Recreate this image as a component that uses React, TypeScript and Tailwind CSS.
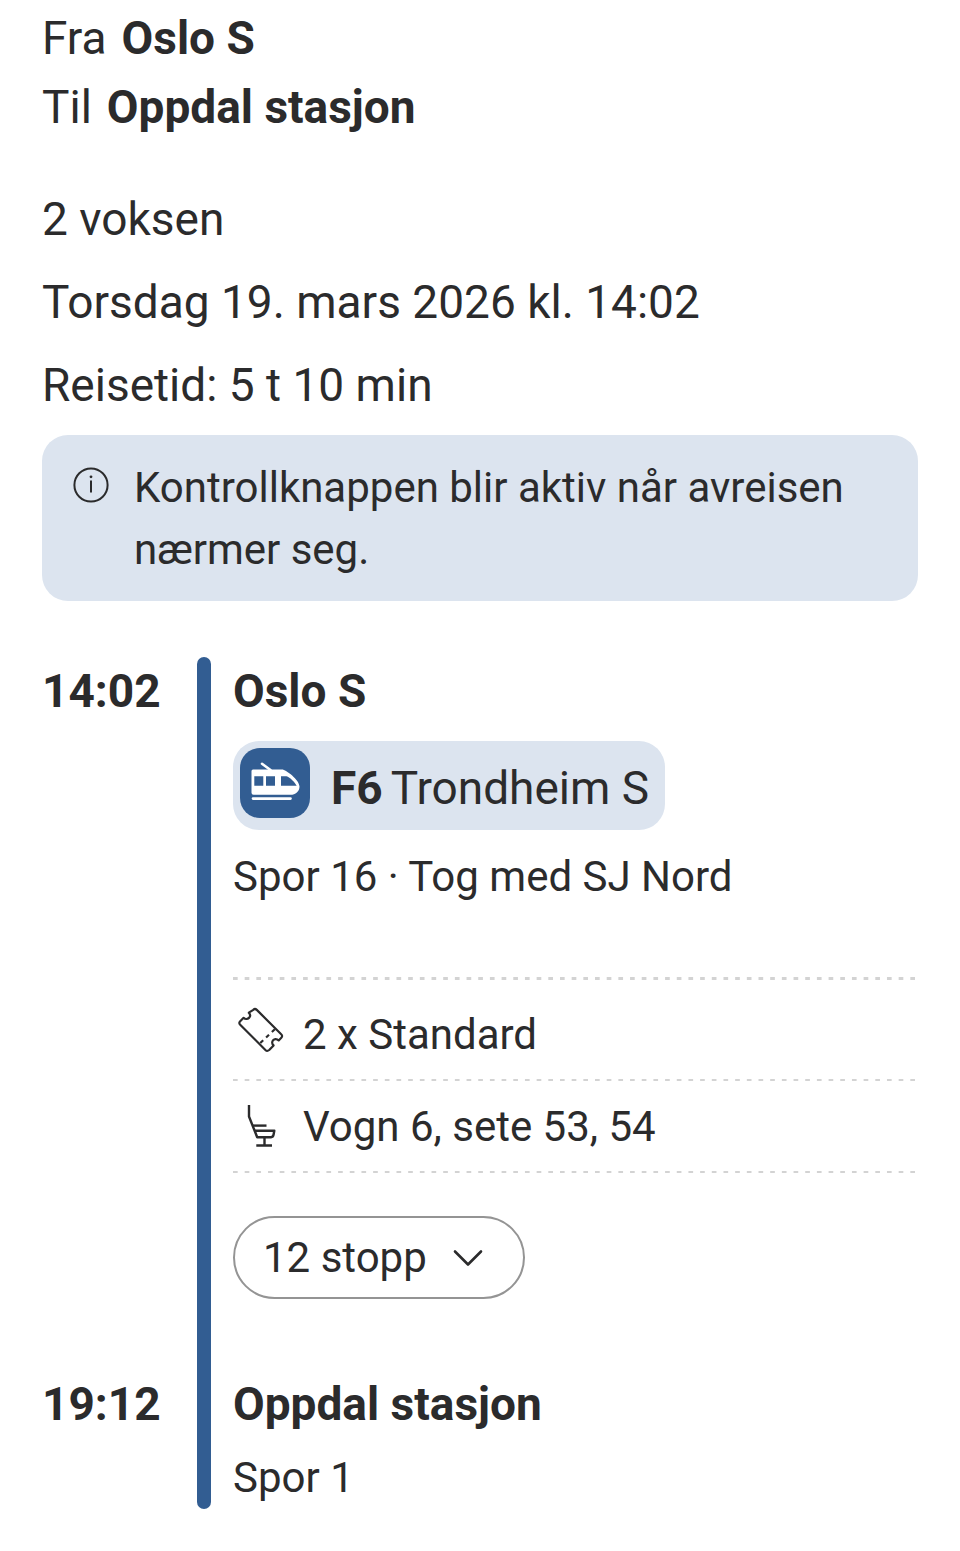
import type { ReactNode } from 'react';

const trip = {
  from: 'Oslo S',
  to: 'Oppdal stasjon',
  passengers: '2 voksen',
  departure: 'Torsdag 19. mars 2026 kl. 14:02',
  duration: 'Reisetid: 5 t 10 min',
};

function InfoIcon() {
  return (
    <svg width="36" height="36" viewBox="0 0 36 36" fill="none" stroke="currentColor" className="shrink-0" aria-hidden="true">
      <circle cx="18" cy="18" r="16.6" strokeWidth="2" />
      <path d="M18 13.6V25.5" strokeWidth="2" />
      <circle cx="18" cy="9.8" r="1.4" fill="currentColor" stroke="none" />
    </svg>
  );
}

function TrainIcon() {
  return (
    <svg width="70" height="70" viewBox="0 0 70 70" aria-hidden="true">
      <path d="M22 15.8L30.5 22" stroke="#fff" strokeWidth="2.6" strokeLinecap="round" />
      <path
        fill="#fff"
        fillRule="evenodd"
        d="M13 21.5H42C46 21.5 59.5 32 59.5 38.5C59.5 43.5 55.5 46.8 50.5 46.8H13.5Q11.5 46.8 11.5 44.8V23Q11.5 21.5 13 21.5ZM14.3 28.3V37.8H23.3V28.3ZM26 28.3V37.8H35V28.3ZM41 28.3V37.8H56.7C55 34.3 50 29.5 46.5 28.3Z"
      />
      <path d="M13 50.6H50.5" stroke="#fff" strokeWidth="2.6" strokeLinecap="round" />
    </svg>
  );
}

function TicketIcon() {
  return (
    <svg width="56" height="56" viewBox="0 4 56 56" fill="none" stroke="currentColor" strokeWidth="2.2" strokeLinejoin="round" aria-hidden="true">
      <path d="M20.3 6.8Q22 5.2 23.8 6.9L48.2 31.3Q50 33 48.3 34.7L45.7 37.4C43.5 35.3 41.2 36 40.1 37.2C38.9 38.5 38.7 40.8 40.6 42.4L36.2 47Q34.2 48.7 32.4 47L7.2 21.7Q5.4 20 7.2 18.2L10.6 14.8C12.3 16.6 14.7 16.2 16 14.9C17.3 13.5 17.5 11.4 15.8 9.7Z" />
      <path d="M41.8 26.3L25.8 41.5" strokeDasharray="4 4" />
    </svg>
  );
}

function SeatIcon() {
  return (
    <svg width="56" height="56" viewBox="0 0 56 56" fill="none" stroke="currentColor" strokeWidth="2.4" strokeLinejoin="round" aria-hidden="true">
      <path d="M16 6V17.5L24.2 38.2H38Q40.2 38 40.6 35.5L41.3 31.8H22" />
      <path d="M20 26.6H33.5" />
      <path d="M31.5 38.2V46.3M23.3 46.5H39" />
    </svg>
  );
}

function ChevronIcon() {
  return (
    <svg width="30" height="18" viewBox="0 0 30 18" fill="none" stroke="currentColor" strokeWidth="2.6" strokeLinecap="round" strokeLinejoin="round" aria-hidden="true">
      <path d="M2 2.5L15 15.5L28 2.5" />
    </svg>
  );
}

// Dashes stretch with the width, so the rule always ends on a full dash
function DashedRule({ thickness = 2 }: { thickness?: number }) {
  return (
    <svg width="100%" height={thickness} className="block" aria-hidden="true">
      <line x1="0" x2="100%" y1={thickness / 2} y2={thickness / 2} pathLength="584" stroke="#d3d3d3" strokeWidth={thickness} strokeDasharray="4 6" />
    </svg>
  );
}

function DetailRow({ icon, children }: { icon: ReactNode; children: ReactNode }) {
  return (
    <div className="flex items-center gap-[14px]">
      {icon}
      <p>{children}</p>
    </div>
  );
}

export default function App() {
  return (
    <main className="min-h-screen bg-white px-[42px] pt-1 pb-10 font-['Roboto',sans-serif] text-[42px] leading-[62px] text-[#2b2b2c]">
      <header className="text-[46px] leading-[69px]">
        <p className="flex gap-[15px]">
          <span>Fra</span>
          <strong className="font-bold">{trip.from}</strong>
        </p>
        <p className="flex gap-[15px]">
          <span>Til</span>
          <strong className="font-bold">{trip.to}</strong>
        </p>
        <div className="mt-[43px] flex flex-col gap-[14px]">
          <p>{trip.passengers}</p>
          <p>{trip.departure}</p>
          <p>{trip.duration}</p>
        </div>
      </header>

      <aside className="mt-[15px] flex gap-[25px] rounded-[26px] bg-[#dce4ef] px-[31px] pt-[22px] pb-5">
        <div className="pt-[10px]">
          <InfoIcon />
        </div>
        <p>Kontrollknappen blir aktiv når avreisen nærmer seg.</p>
      </aside>

      <section className="mt-14 grid grid-cols-[155px_14px_1fr]">
        <time className="text-[46px] leading-[69px] font-bold">14:02</time>
        <div className="row-span-2 rounded-full bg-[#325d92]" />
        <div className="pr-[3px] pl-[22px]">
          <h2 className="text-[46px] leading-[69px] font-bold">{trip.from}</h2>
          <div className="mt-[15px] flex w-fit items-start gap-[21px] rounded-[26px] bg-[#dce4ef] py-[7px] pr-4 pl-[7px]">
            <div className="rounded-[20px] bg-[#325d92]">
              <TrainIcon />
            </div>
            <p className="flex gap-2 pt-[6px] text-[46px] leading-[69px]">
              <strong className="font-bold">F6</strong>
              <span>Trondheim S</span>
            </p>
          </div>
          <p className="mt-4">Spor 16 · Tog med SJ Nord</p>

          <div className="mt-[69px]">
            <DashedRule thickness={3} />
            <div className="pt-6 pb-[13px]">
              <DetailRow icon={<TicketIcon />}>2 x Standard</DetailRow>
            </div>
            <DashedRule />
            <div className="pt-[15px] pb-[13px]">
              <DetailRow icon={<SeatIcon />}>Vogn 6, sete 53, 54</DetailRow>
            </div>
            <DashedRule />
          </div>

          <button type="button" aria-expanded="false" className="mt-[43px] mb-[71px] flex h-[83px] items-center gap-[26px] rounded-full border-2 border-[#949494] pr-10 pl-7">
            <span>12 stopp</span>
            <ChevronIcon />
          </button>
        </div>

        <time className="text-[46px] leading-[69px] font-bold">19:12</time>
        <div className="pr-[3px] pl-[22px]">
          <h2 className="text-[46px] leading-[69px] font-bold">{trip.to}</h2>
          <p className="mt-2">Spor 1</p>
        </div>
      </section>
    </main>
  );
}
